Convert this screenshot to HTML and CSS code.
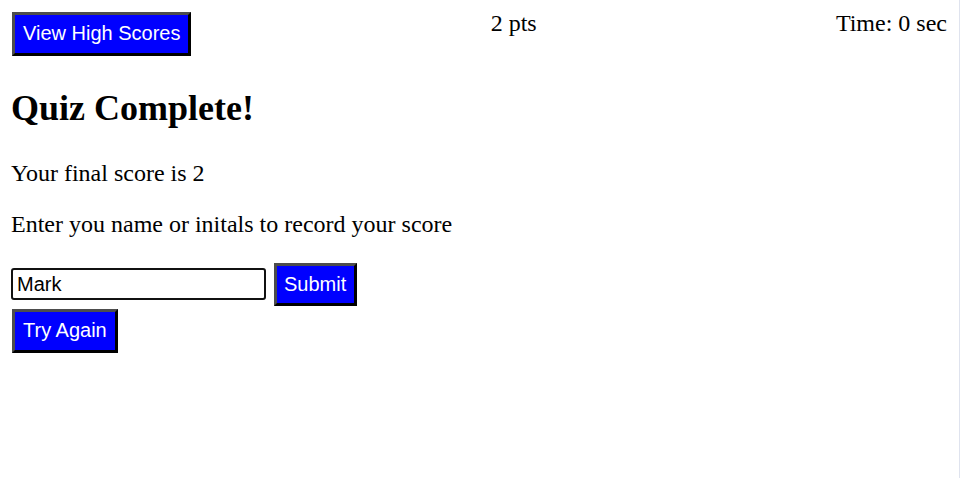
FILE: index.html
```html
<!DOCTYPE html>
<html>
<head>
<meta charset="utf-8">
<title>Quiz</title>
<link rel="stylesheet" href="styles.css">
</head>
<body>
<div class="page">
  <header class="topbar">
    <button class="btn">View High Scores</button>
    <span class="score">2 pts</span>
    <span class="timer">Time: 0 sec</span>
  </header>
  <main class="content">
    <h1 class="title">Quiz Complete!</h1>
    <p class="line first">Your final score is 2</p>
    <p class="line">Enter you name or initals to record your score</p>
    <form class="entry">
      <input class="name-input" type="text" value="Mark">
      <button class="btn" type="button">Submit</button>
    </form>
    <button class="btn again">Try Again</button>
  </main>
</div>
</body>
</html>
```

FILE: styles.css
```css
html, body {
  margin: 0;
  padding: 0;
  background: #fff;
}
body {
  font-family: "Liberation Serif", "Times New Roman", serif;
  font-size: 24px;
  color: #000;
  border-right: 1px solid #dfe3ee;
  min-height: 478px;
  box-sizing: border-box;
}
.page {
  padding: 12px 12px 12px 11px;
}
.topbar {
  display: flex;
  justify-content: space-between;
  align-items: flex-start;
}
.score, .timer {
  line-height: 22px;
}
.btn {
  font-family: "Liberation Sans", Arial, sans-serif;
  font-size: 20px;
  line-height: 23px;
  color: #fff;
  background: #0000ff;
  border: 3px solid;
  border-color: #4d4d4d #000 #000 #4d4d4d;
  padding: 7px 8px 7px;
  margin: 0;
  cursor: pointer;
}
.topbar .btn {
  margin-left: 1px;
  padding-bottom: 8px;
}
.title {
  font-size: 36px;
  font-weight: bold;
  margin: 32px 0 0;
  line-height: 41px;
}
.line {
  margin: 23px 0 0;
  line-height: 28px;
}
.line.first {
  margin-top: 30px;
}
.entry {
  display: flex;
  align-items: flex-start;
  gap: 8px;
  margin-top: 25px;
}
.name-input {
  width: 255px;
  height: 32px;
  box-sizing: border-box;
  font-family: "Liberation Sans", Arial, sans-serif;
  font-size: 20px;
  padding: 1px 4px;
  border: 2px solid #111;
  border-radius: 3px;
  margin: 5px 0 0;
  outline: none;
}
.entry .btn {
  padding-left: 7px;
  padding-right: 8px;
}
.again {
  margin-top: 3px;
  margin-left: 1px;
  padding-bottom: 8px;
}
```
